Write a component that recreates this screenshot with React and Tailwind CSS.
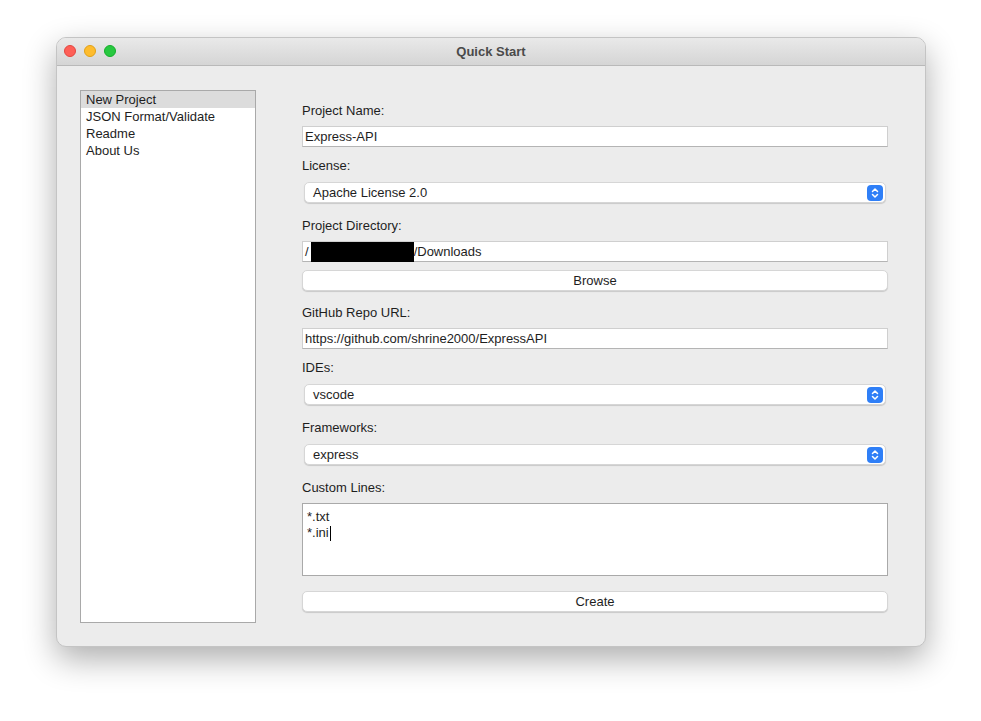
import React from 'react';

var font = { fontFamily: '"Liberation Sans", Arial, sans-serif' };

function Label(props) {
  return <div className={'h-4 leading-[18px] text-[13px] text-[#1e1e1e] ' + (props.className || '')}>{props.children}</div>;
}

function TextInput(props) {
  return (
    <div className={'h-[21px] bg-white border border-[#cfcfcf] border-b-[#b4b4b4] flex items-center pt-px px-[2px] text-[13px] text-[#1e1e1e] ' + props.className}>
      {props.children}
    </div>
  );
}

function Chevrons() {
  return (
    <div className="w-4 h-4 rounded-[4px] bg-[#2f7ff7] flex items-center justify-center">
      <svg width="10" height="12" viewBox="0 0 10 12" fill="none" stroke="white" strokeWidth="1.5" strokeLinecap="round" strokeLinejoin="round">
        <path d="M2.5 4.5 L5 2 L7.5 4.5" />
        <path d="M2.5 7.5 L5 10 L7.5 7.5" />
      </svg>
    </div>
  );
}

function Select(props) {
  return (
    <div className={'h-[21px] mx-[2px] bg-white rounded-[5px] border border-[#d6d6d6] shadow-[0_1px_1px_rgba(0,0,0,0.15)] flex items-center justify-between pl-[8px] pr-[2px] text-[13px] text-[#1e1e1e] ' + props.className}>
      <span className="pt-px">{props.value}</span>
      <Chevrons />
    </div>
  );
}

function Button(props) {
  return (
    <div className={'h-[21px] bg-white rounded-[5px] border border-[#d6d6d6] shadow-[0_1px_1px_rgba(0,0,0,0.15)] flex items-center justify-center pt-px text-[13px] text-[#1e1e1e] ' + props.className}>
      {props.children}
    </div>
  );
}

export default function App() {
  var items = ['New Project', 'JSON Format/Validate', 'Readme', 'About Us'];

  return (
    <div className="w-[981px] h-[721px] bg-white overflow-hidden" style={font}>
      <div className="ml-[56px] mt-[37px] w-[870px] h-[610px] rounded-[10px] bg-[#ececec] border border-[#c4c4c4] shadow-[0_12px_32px_rgba(0,0,0,0.32)] overflow-hidden flex flex-col">
        {/* Title bar */}
        <div className="h-[28px] shrink-0 bg-gradient-to-b from-[#e9e9e9] to-[#d5d5d5] border-b border-[#b9b9b9] relative flex items-center justify-center">
          <div className="absolute left-[7px] top-[7px] flex gap-2">
            <div className="w-3 h-3 rounded-full bg-[#fe5f57] border border-[#e2463f]"></div>
            <div className="w-3 h-3 rounded-full bg-[#febc2e] border border-[#e1a116]"></div>
            <div className="w-3 h-3 rounded-full bg-[#28c840] border border-[#14ae2a]"></div>
          </div>
          <span className="text-[13px] font-bold text-[#4a4a4a]">Quick Start</span>
        </div>

        {/* Body */}
        <div className="flex pl-[23px] pt-[24px]">
          <div className="w-[176px] h-[533px] bg-white border border-[#a9a9a9]">
            {items.map(function (it, i) {
              return (
                <div key={it} className={'h-[17px] leading-[17px] pl-[5px] text-[13px] text-[#1e1e1e] ' + (i === 0 ? 'bg-[#dcdcdc]' : '')}>
                  {it}
                </div>
              );
            })}
          </div>

          <div className="ml-[46px] w-[586px] pt-[12px] flex flex-col">
            <Label>Project Name:</Label>
            <TextInput className="mt-2">Express-API</TextInput>

            <Label className="mt-[10px]">License:</Label>
            <Select className="mt-[9px]" value="Apache License 2.0" />

            <Label className="mt-[14px]">Project Directory:</Label>
            <TextInput className="mt-2">
              <span>/</span>
              <span className="inline-block w-[103px] h-[20px] bg-black ml-[2px]"></span>
              <span>/Downloads</span>
            </TextInput>
            <Button className="mt-2">Browse</Button>

            <Label className="mt-[13px]">GitHub Repo URL:</Label>
            <TextInput className="mt-2">https://github.com/shrine2000/ExpressAPI</TextInput>

            <Label className="mt-[10px]">IDEs:</Label>
            <Select className="mt-[9px]" value="vscode" />

            <Label className="mt-[14px]">Frameworks:</Label>
            <Select className="mt-[9px]" value="express" />

            <Label className="mt-[14px]">Custom Lines:</Label>
            <div className="mt-2 h-[73px] bg-white border border-[#a9a9a9] px-[4px] pt-[5px] text-[13px] leading-4 text-[#1e1e1e]">
              <div>*.txt</div>
              <div className="flex items-center">*.ini<span className="inline-block w-px h-[15px] bg-black ml-[1px]"></span></div>
            </div>

            <Button className="mt-[15px]">Create</Button>
          </div>
        </div>
      </div>
    </div>
  );
}
